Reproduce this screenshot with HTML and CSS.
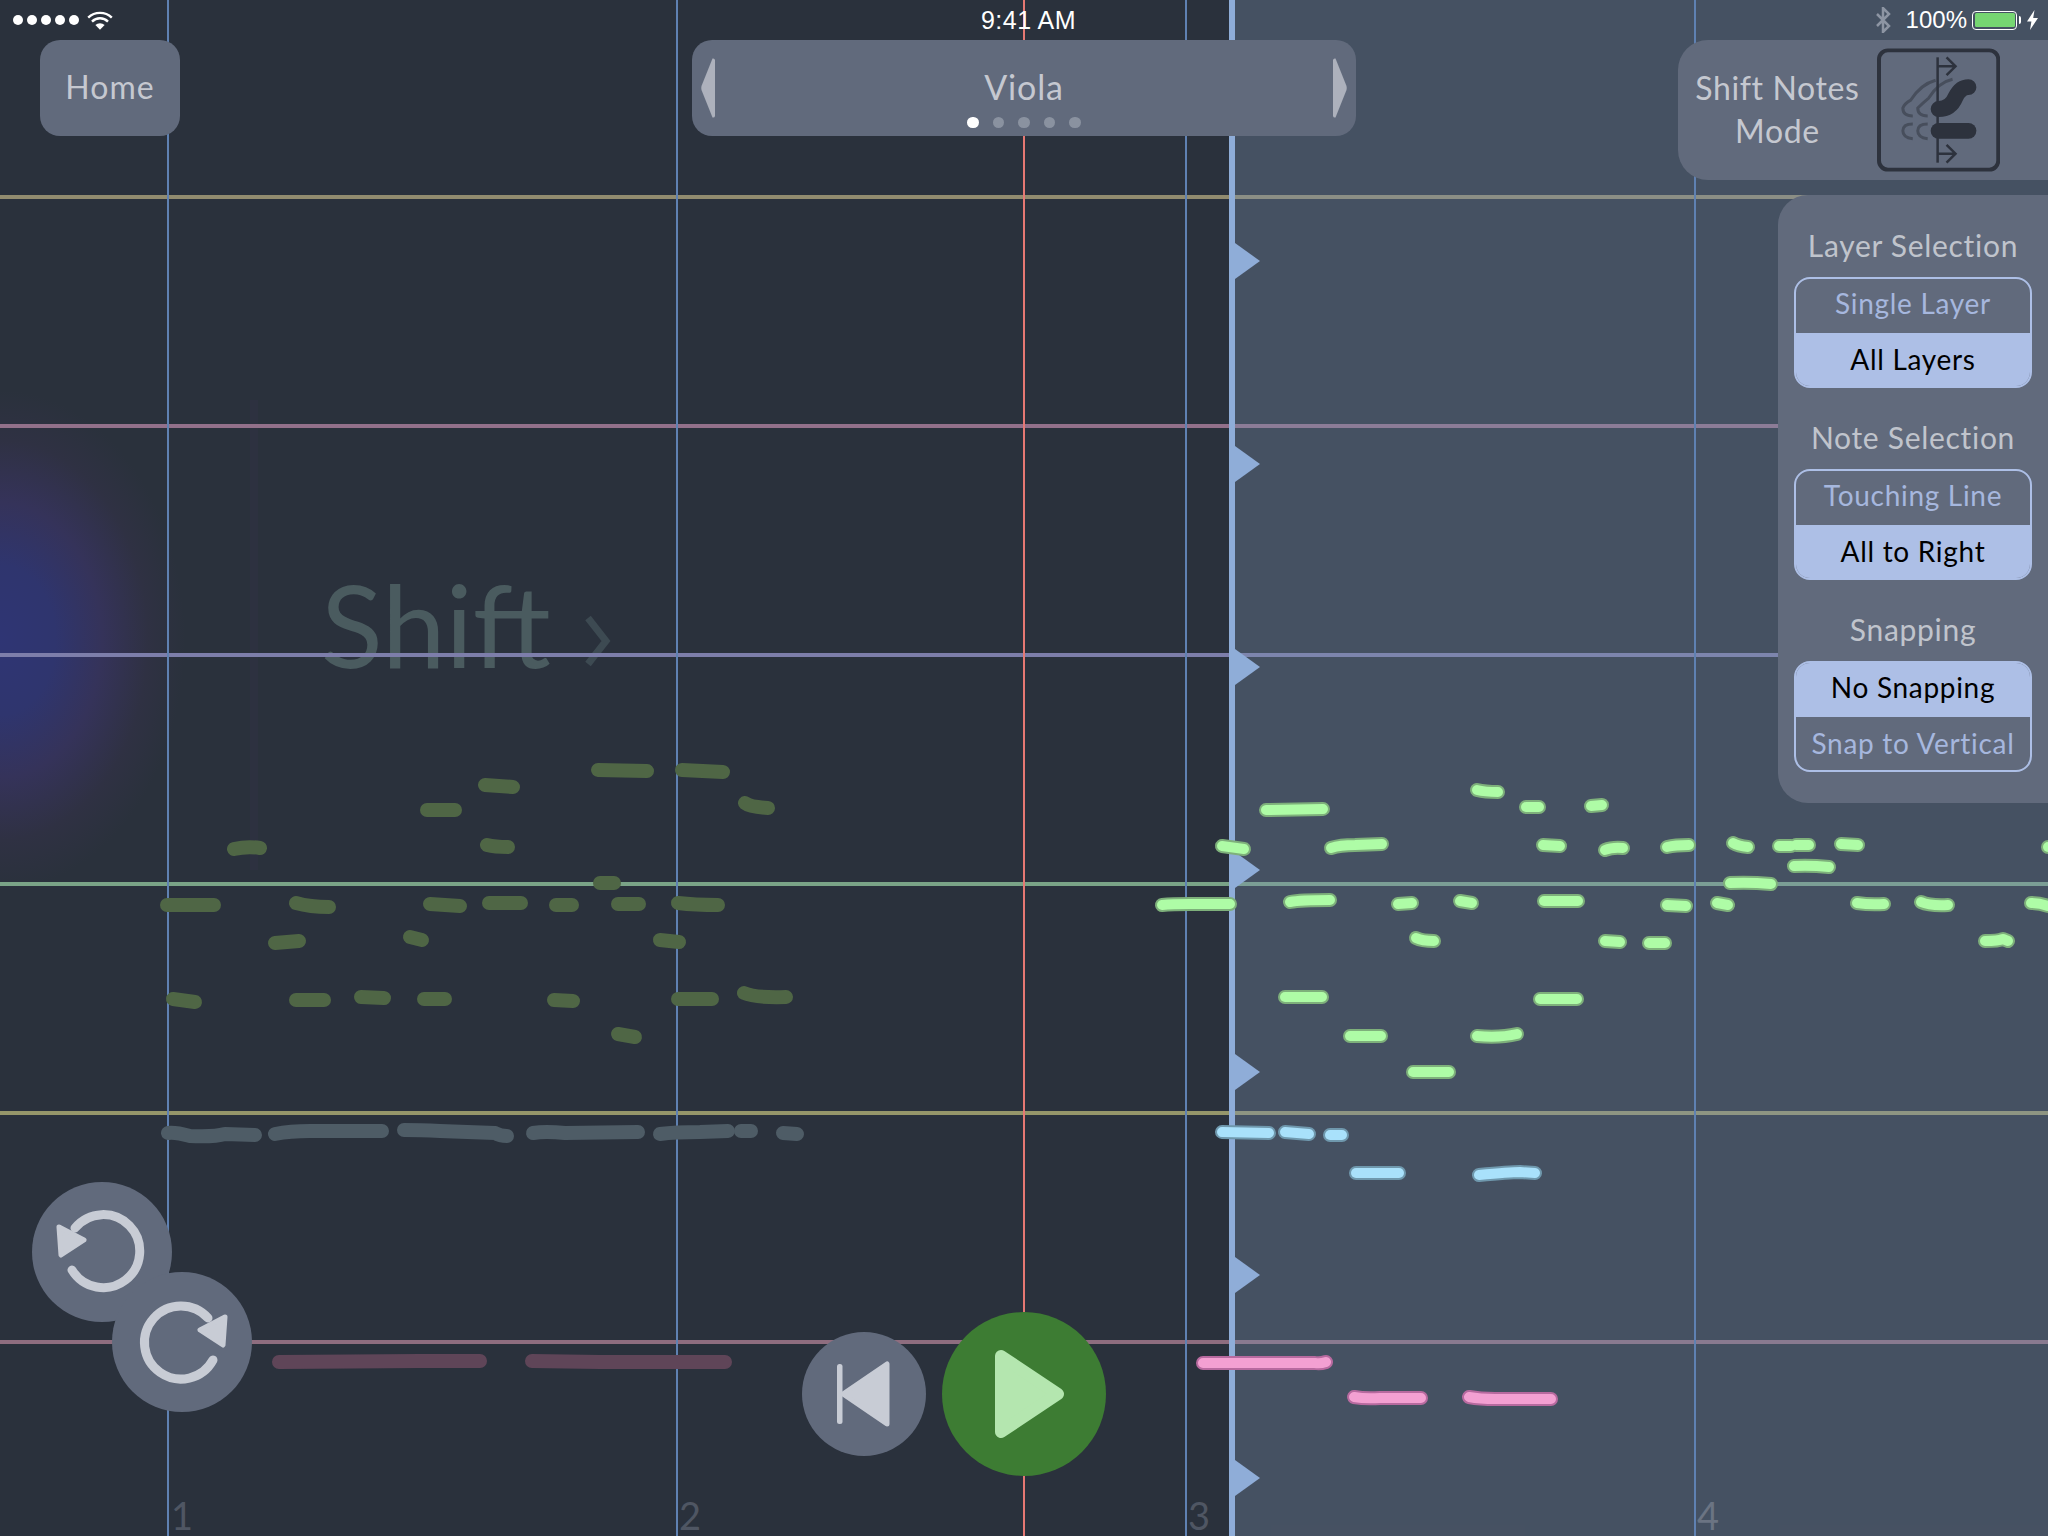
FILE: index.html
```html
<!DOCTYPE html>
<html lang="en">
  <head>
    <meta charset="UTF-8" />
    <meta name="viewport" content="width=device-width, initial-scale=1.0" />
    <title>Shift Notes</title>
    <link rel="stylesheet" href="styles.css">
  </head>
  <body>
    <div class="stage">
      <!-- Score canvas: everything here sits at its place in time and pitch -->
      <svg class="score" viewBox="0 0 2048 1536" width="2048" height="1536">
        <defs>
          <radialGradient id="glow">
            <stop offset="0" stop-color="#2f3574" />
            <stop offset="0.3" stop-color="#2f356e" />
            <stop offset="0.55" stop-color="#35335a" />
            <stop offset="0.8" stop-color="#2f3143" />
            <stop offset="1" stop-color="#2a313c" />
          </radialGradient>

          <g id="notes-green">
            <path d="M1266 810L1323 809" />
            <path d="M1222 846L1244 849" />
            <path d="M1331 848Q1340 845 1355 845L1382 844" />
            <path d="M1477 790Q1485 792 1498 792" />
            <path d="M1526 807H1539" />
            <path d="M1591 806L1602 805" />
            <path d="M1543 845L1560 846" />
            <path d="M1605 850Q1612 847 1623 848" />
            <path d="M1162 905Q1172 904 1190 904H1230" />
            <path d="M1290 902Q1300 900 1330 900" />
            <path d="M1398 904L1412 903" />
            <path d="M1460 901L1472 903" />
            <path d="M1544 901H1578" />
            <path d="M1416 938Q1422 941 1434 941" />
            <path d="M1605 941L1620 942" />
            <path d="M1285 997H1322" />
            <path d="M1540 999H1577" />
            <path d="M1350 1036H1381" />
            <path d="M1477 1036Q1500 1038 1517 1034" />
            <path d="M1413 1072H1449" />
            <path d="M1667 847Q1675 845 1689 845" />
            <path d="M1733 843Q1738 846 1748 847" />
            <path d="M1779 846H1791" />
            <path d="M1796 845H1809" />
            <path d="M1841 844L1858 845" />
            <path d="M1794 866Q1810 865 1829 867" />
            <path d="M1730 883Q1750 882 1771 884" />
            <path d="M1667 905L1686 906" />
            <path d="M1717 903L1728 905" />
            <path d="M1857 903Q1870 905 1884 904" />
            <path d="M1921 902Q1930 906 1948 905" />
            <path d="M2031 903Q2040 903 2048 906" />
            <path d="M1985 941Q1998 941 2003 939L2008 941" />
            <path d="M1649 943H1665" />
            <path d="M2048 847H2054" />
          </g>

          <g id="notes-blue">
            <path d="M1222 1132L1269 1133" />
            <path d="M1285 1132L1309 1134" />
            <path d="M1330 1135H1342" />
            <path d="M1356 1173H1399" />
            <path d="M1479 1175Q1510 1172 1520 1172L1535 1173" />
          </g>

          <g id="notes-pink">
            <path d="M1203 1363H1315Q1320 1364 1326 1362" />
            <path d="M1354 1397Q1365 1399 1380 1398H1421" />
            <path d="M1469 1397Q1480 1399 1495 1399H1551" />
          </g>
        </defs>

        <rect class="backdrop" width="2048" height="1536" />
        <ellipse cx="0" cy="640" rx="185" ry="250" fill="url(#glow)" />
        <rect class="ghost-strip" x="250" y="400" width="8" height="470" />

        <text class="ghost-word" x="321" y="668">Shift</text>
        <path class="ghost-chevron" d="M588 618L606 641L588 664" />

        <line class="staff staff-a" x1="0" y1="197" x2="2048" y2="197" />
        <line class="staff staff-b" x1="0" y1="426" x2="2048" y2="426" />
        <line class="staff staff-c" x1="0" y1="655" x2="2048" y2="655" />
        <line class="staff staff-d" x1="0" y1="884" x2="2048" y2="884" />
        <line class="staff staff-e" x1="0" y1="1113" x2="2048" y2="1113" />
        <line class="staff staff-f" x1="0" y1="1342" x2="2048" y2="1342" />

        <line class="bar-line" x1="168" y1="0" x2="168" y2="1536" />
        <line class="bar-line" x1="677" y1="0" x2="677" y2="1536" />
        <line class="bar-line" x1="1186" y1="0" x2="1186" y2="1536" />

        <!-- shaded part right of the playhead -->
        <rect class="shade" x="1235" y="0" width="813" height="1536" />
        <line class="bar-line" x1="1695" y1="0" x2="1695" y2="1536" />
        <line class="now-line" x1="1024" y1="0" x2="1024" y2="1536" />

        <text class="bar-number" x="171" y="1530">1</text>
        <text class="bar-number" x="679" y="1530">2</text>
        <text class="bar-number" x="1188" y="1530">3</text>
        <text class="bar-number bar-number-shaded" x="1697" y="1530">4</text>

        <rect class="playhead" x="1229" y="0" width="6" height="1536" />
        <path class="playhead" d="M1235 243L1260 261L1235 279Z" />
        <path class="playhead" d="M1235 446L1260 464L1235 482Z" />
        <path class="playhead" d="M1235 649L1260 667L1235 685Z" />
        <path class="playhead" d="M1235 852L1260 870L1235 888Z" />
        <path class="playhead" d="M1235 1054L1260 1072L1235 1090Z" />
        <path class="playhead" d="M1235 1257L1260 1275L1235 1293Z" />
        <path class="playhead" d="M1235 1460L1260 1478L1235 1496Z" />

        <!-- greyed notes, left of the playhead -->
        <g class="note note-moss">
          <path d="M234 849Q247 846 260 848" />
          <path d="M427 810H455" />
          <path d="M485 785L513 787" />
          <path d="M598 770L647 771" />
          <path d="M682 770L723 772" />
          <path d="M745 803Q750 807 768 808" />
          <path d="M487 845Q495 847 508 847" />
          <path d="M600 883H614" />
          <path d="M167 905H214" />
          <path d="M296 903Q310 907 329 907" />
          <path d="M430 904Q445 905 460 906" />
          <path d="M489 903H521" />
          <path d="M556 905H572" />
          <path d="M618 904H639" />
          <path d="M678 903Q695 905 718 905" />
          <path d="M275 943L299 941" />
          <path d="M410 937L422 940" />
          <path d="M660 940L679 942" />
          <path d="M173 999L195 1002" />
          <path d="M296 1000H324" />
          <path d="M361 997L384 998" />
          <path d="M424 999H445" />
          <path d="M554 1000L573 1001" />
          <path d="M678 999H712" />
          <path d="M744 993Q755 998 786 997" />
          <path d="M618 1034L635 1037" />
        </g>
        <g class="note note-slate">
          <path d="M168 1133Q175 1132 190 1136Q215 1137 225 1134L255 1135" />
          <path d="M275 1134Q290 1131 310 1131H382" />
          <path d="M404 1130Q420 1130 440 1131L495 1133Q500 1136 507 1136" />
          <path d="M533 1133Q545 1131 565 1133L638 1132" />
          <path d="M660 1134Q675 1132 700 1132L728 1131" />
          <path d="M741 1131H751" />
          <path d="M783 1133L797 1134" />
        </g>
        <g class="note note-maroon">
          <path d="M279 1362L420 1361L480 1361" />
          <path d="M532 1361L600 1362L725 1362" />
        </g>

        <!-- live notes: a dark edge, then the bright core on top -->
        <use href="#notes-green" class="note edge-green" />
        <use href="#notes-green" class="note core-green" />
        <use href="#notes-blue" class="note edge-blue" />
        <use href="#notes-blue" class="note core-blue" />
        <use href="#notes-pink" class="note edge-pink" />
        <use href="#notes-pink" class="note core-pink" />
      </svg>

      <div class="status-bar">
        <div class="status-left">
          <span class="signal"><i></i><i></i><i></i><i></i><i></i></span>
          <svg class="wifi" viewBox="0 0 26 19" width="26" height="19">
            <path d="M1.2 6.6A17 17 0 0 1 24.8 6.6" />
            <path d="M5 10.6A11.3 11.3 0 0 1 21 10.6" />
            <path class="wifi-wedge" d="M13 18.8L8.4 14A6.6 6.6 0 0 1 17.6 14Z" />
          </svg>
        </div>
        <div class="status-time">9:41 AM</div>
        <div class="status-right">
          <svg class="bluetooth" viewBox="0 0 16 26" width="16" height="26">
            <path d="M2 7L14 19L8 25V1L14 7L2 19" />
          </svg>
          <span class="percent">100%</span>
          <span class="battery"><span class="battery-level"></span></span>
          <svg class="bolt" viewBox="0 0 11 20" width="11" height="20">
            <path d="M7.5 0L0 11.5H4.4L3 20L11 8H6.2Z" />
          </svg>
        </div>
      </div>

      <div class="toolbar">
        <button class="panel home-button">Home</button>

        <div class="panel instrument">
          <svg class="pager-arrow" viewBox="0 0 14 62" width="14" height="62">
            <path d="M11.5 1.5Q13.5 1 14 3V59Q13.5 61 11.5 60.5L0.5 33Q0 31 0.5 29Z" />
          </svg>
          <div class="instrument-name">
            <span>Viola</span>
            <div class="pager-dots">
              <i class="active"></i><i></i><i></i><i></i><i></i>
            </div>
          </div>
          <svg class="pager-arrow" viewBox="0 0 14 62" width="14" height="62">
            <path d="M2.5 1.5Q0.5 1 0 3V59Q0.5 61 2.5 60.5L13.5 33Q14 31 13.5 29Z" />
          </svg>
        </div>

        <div class="right-column">
          <div class="panel mode-panel">
            <div class="mode-label">Shift Notes<br />Mode</div>
            <svg class="mode-icon" viewBox="0 0 124 124" width="124" height="124">
              <rect class="icon-frame" x="2" y="2" width="120" height="120" rx="9" />
              <g class="icon-ghost">
                <path d="M36 76Q26 76 26 83T36 91" />
                <path d="M51 76Q41 76 41 83T51 91" />
                <path d="M36 68Q26 68 26 60Q28 55 34 52Q44 36 59 32" />
                <path d="M51 68Q41 68 41 60Q46 55 52 50Q62 34 76 31" />
              </g>
              <g class="icon-line">
                <path d="M61 9V115" />
                <path d="M61 18H79M70 9L79 18L70 27" />
                <path d="M61 106H79M70 97L79 106L70 115" />
              </g>
              <g class="icon-note">
                <path d="M62 61Q74 61 79 49Q84 39 92 39" />
                <path d="M62 83H92" />
              </g>
            </svg>
          </div>

          <div class="panel settings">
            <div class="setting">
              <h2>Layer Selection</h2>
              <div class="segments">
                <div class="segment">Single Layer</div>
                <div class="segment selected">All Layers</div>
              </div>
            </div>
            <div class="setting">
              <h2>Note Selection</h2>
              <div class="segments">
                <div class="segment">Touching Line</div>
                <div class="segment selected">All to Right</div>
              </div>
            </div>
            <div class="setting">
              <h2>Snapping</h2>
              <div class="segments">
                <div class="segment selected">No Snapping</div>
                <div class="segment">Snap to Vertical</div>
              </div>
            </div>
          </div>
        </div>
      </div>

      <div class="history">
        <button class="round-button undo">
          <svg viewBox="0 0 140 140" width="140" height="140">
            <path class="arc" d="M40 88A36.5 36.5 0 1 0 43 46" />
            <path class="arrow" d="M27 45L52 58L29 73Z" />
          </svg>
        </button>
        <button class="round-button redo">
          <svg viewBox="0 0 140 140" width="140" height="140">
            <path class="arc" d="M101 88A36.5 36.5 0 1 1 96 46" />
            <path class="arrow" d="M113 45L88 58L111 73Z" />
          </svg>
        </button>
      </div>

      <div class="transport">
        <button class="round-button rewind">
          <svg viewBox="0 0 124 124" width="124" height="124">
            <rect class="solid" x="35" y="32" width="5.5" height="60" rx="2.5" />
            <path class="arrow" d="M41 62L85 32V92Z" />
          </svg>
        </button>
        <button class="round-button play">
          <svg viewBox="0 0 164 164" width="164" height="164">
            <path class="play-arrow" d="M59 44L116 82L59 120Z" />
          </svg>
        </button>
      </div>
    </div>
  </body>
</html>
```

FILE: styles.css
```css
/* General styles */
body {
  margin: 0;
  background-color: #2a313c;
  font-family: "Lato", "Open Sans", sans-serif;
}

.stage {
  position: relative;
  width: 2048px;
  height: 1536px;
  overflow: hidden;
}

button {
  border: none;
  padding: 0;
  font-family: inherit;
}

/* Score canvas */
.score {
  position: absolute;
  top: 0;
  left: 0;
}

.backdrop {
  fill: #2a313c;
}

.shade {
  fill: rgba(129, 149, 179, 0.32);
}

.ghost-strip {
  fill: rgba(62, 50, 90, 0.14);
}

.ghost-word {
  font-family: "Lato", sans-serif;
  font-weight: 400;
  font-size: 114px;
  fill: #4a5b5f;
}

.ghost-chevron {
  fill: none;
  stroke: #3d4a52;
  stroke-width: 7;
}

.staff {
  stroke-width: 4;
}

.staff-a { stroke: #918b6f; }
.staff-b { stroke: #92708a; }
.staff-c { stroke: #7d7eaa; }
.staff-d { stroke: #7aa387; }
.staff-e { stroke: #95966a; }
.staff-f { stroke: #8e6d7f; }

.bar-line {
  stroke: #5f81b2;
  stroke-width: 2;
}

.now-line {
  stroke: #e57873;
  stroke-width: 2;
}

.bar-number {
  font-family: "Lato", sans-serif;
  font-weight: 400;
  font-size: 38px;
  fill: #4f5663;
}

.bar-number-shaded {
  fill: #6b7483;
}

.playhead {
  fill: #8fadd8;
}

/* Notes */
.note {
  fill: none;
  stroke-linecap: round;
  stroke-linejoin: round;
  stroke-width: 14;
}

.note-moss { stroke: #4f6645; }
.note-slate { stroke: #4e5c66; }
.note-maroon { stroke: #5f4558; }

.edge-green { stroke: #7eb07b; }
.edge-blue { stroke: #6f98ad; }
.edge-pink { stroke: #b76a9f; }

.core-green,
.core-blue,
.core-pink {
  stroke-width: 10;
}

.core-green { stroke: #aefca6; }
.core-blue { stroke: #a9e1fb; }
.core-pink { stroke: #f3a0d2; }

/* Status bar */
.status-bar {
  position: absolute;
  top: 0;
  left: 0;
  right: 0;
  height: 40px;
  box-sizing: border-box;
  padding: 0 10px 0 13px;
  display: grid;
  grid-template-columns: 1fr auto 1fr;
  align-items: center;
  color: #fff;
  font-family: "Liberation Sans", sans-serif;
  font-size: 24px;
}

.status-left,
.status-right {
  display: flex;
  align-items: center;
}

.status-right {
  justify-content: flex-end;
}

.signal {
  display: flex;
  gap: 4px;
  margin-right: 8px;
}

.signal i {
  width: 10px;
  height: 10px;
  border-radius: 50%;
  background-color: #fff;
}

.wifi path {
  fill: none;
  stroke: #fff;
  stroke-width: 2.4;
}

.wifi .wifi-wedge {
  fill: #fff;
  stroke: none;
}

.status-time {
  font-size: 25px;
  letter-spacing: 0.5px;
  transform: translateX(3px);
}

.bluetooth {
  margin-right: 15px;
}

.bluetooth path {
  fill: none;
  stroke: #8d95a3;
  stroke-width: 2.5;
}

.percent {
  margin-right: 5px;
}

.battery {
  position: relative;
  width: 45px;
  height: 19px;
  box-sizing: border-box;
  border: 1.5px solid #fff;
  border-radius: 4px;
  padding: 1.5px;
  margin-right: 10px;
}

.battery::after {
  content: "";
  position: absolute;
  right: -5px;
  top: 4px;
  width: 2.5px;
  height: 8px;
  border-radius: 0 2px 2px 0;
  background-color: #fff;
}

.battery-level {
  display: block;
  height: 100%;
  border-radius: 1.5px;
  background-color: #76d672;
}

.bolt {
  fill: #fff;
}

/* Top toolbar */
.toolbar {
  position: absolute;
  top: 40px;
  left: 40px;
  right: 0;
  display: flex;
  align-items: flex-start;
}

.panel {
  background-color: #616a7c;
  color: #c5c8d0;
}

.home-button {
  width: 140px;
  height: 96px;
  padding-bottom: 4px;
  border-radius: 20px;
  font-size: 32px;
  letter-spacing: 1px;
  color: #c5c8d0;
}

.instrument {
  width: 664px;
  height: 96px;
  margin-left: 512px;
  box-sizing: border-box;
  padding: 0 9px;
  border-radius: 20px;
  display: flex;
  align-items: center;
  justify-content: space-between;
}

.pager-arrow {
  fill: #adb1bc;
}

.instrument-name {
  display: flex;
  flex-direction: column;
  align-items: center;
  font-size: 34px;
  letter-spacing: 0.8px;
  padding-top: 18px;
  line-height: 42px;
}

.pager-dots {
  display: flex;
  gap: 14px;
  margin-top: 9px;
  height: 12px;
}

.pager-dots i {
  width: 11.5px;
  height: 11.5px;
  border-radius: 50%;
  background-color: #8a92a0;
}

.pager-dots i.active {
  background-color: #fff;
}

.right-column {
  margin-left: auto;
  width: 370px;
  display: flex;
  flex-direction: column;
  align-items: flex-end;
  gap: 15px;
}

.mode-panel {
  width: 370px;
  height: 140px;
  box-sizing: border-box;
  padding: 8px 48px 8px 0;
  border-radius: 30px 0 0 30px;
  display: flex;
  align-items: center;
  justify-content: space-between;
}

.mode-label {
  width: 200px;
  margin-top: -3px;
  text-align: center;
  font-size: 32px;
  letter-spacing: 0.6px;
  line-height: 43px;
}

.icon-frame {
  fill: none;
  stroke: #2d323d;
  stroke-width: 4;
}

.icon-ghost {
  fill: none;
  stroke: #474e5c;
  stroke-width: 3;
}

.icon-line {
  fill: none;
  stroke: #2d323d;
  stroke-width: 2.5;
}

.icon-note {
  fill: none;
  stroke: #2d323d;
  stroke-width: 16;
  stroke-linecap: round;
}

/* Settings panel */
.settings {
  width: 270px;
  height: 608px;
  box-sizing: border-box;
  padding: 0 16px;
  border-radius: 30px 0 0 30px;
  display: flex;
  flex-direction: column;
}

.setting h2 {
  margin: 0;
  height: 82px;
  box-sizing: border-box;
  padding-top: 29px;
  line-height: 42px;
  font-size: 30px;
  font-weight: 400;
  letter-spacing: 0.7px;
  text-align: center;
  color: #c0c4cc;
}

.setting + .setting h2 {
  height: 81px;
  padding-top: 28px;
}

.segments {
  width: 238px;
  height: 111px;
  box-sizing: border-box;
  border: 2px solid #adbfe6;
  border-radius: 16px;
  overflow: hidden;
}

.segment {
  height: 53px;
  box-sizing: border-box;
  padding-bottom: 2px;
  display: flex;
  align-items: center;
  justify-content: center;
  font-size: 28px;
  letter-spacing: 0.7px;
  color: #a6b7de;
}

.segment:first-child {
  height: 54px;
  padding-bottom: 6px;
}

.segment.selected {
  background-color: #adbfe6;
  color: #000;
}

/* Round buttons */
.round-button {
  display: block;
  border-radius: 50%;
  background-color: #616a7c;
}

.round-button svg {
  display: block;
}

.arc {
  fill: none;
  stroke: #c8ccd5;
  stroke-width: 9;
  stroke-linecap: round;
}

.arrow {
  fill: #c8ccd5;
  stroke: #c8ccd5;
  stroke-width: 5;
  stroke-linejoin: round;
}

.solid {
  fill: #c8ccd5;
}

.history {
  position: absolute;
  left: 32px;
  top: 1182px;
}

.history .round-button {
  width: 140px;
  height: 140px;
}

.redo {
  margin: -50px 0 0 80px;
}

.transport {
  position: absolute;
  left: 802px;
  top: 1312px;
  display: flex;
  align-items: center;
  gap: 16px;
}

.rewind {
  width: 124px;
  height: 124px;
}

.play {
  width: 164px;
  height: 164px;
  background-color: #3d7c33;
}

.play-arrow {
  fill: #b4e6af;
  stroke: #b4e6af;
  stroke-width: 12;
  stroke-linejoin: round;
}
```
